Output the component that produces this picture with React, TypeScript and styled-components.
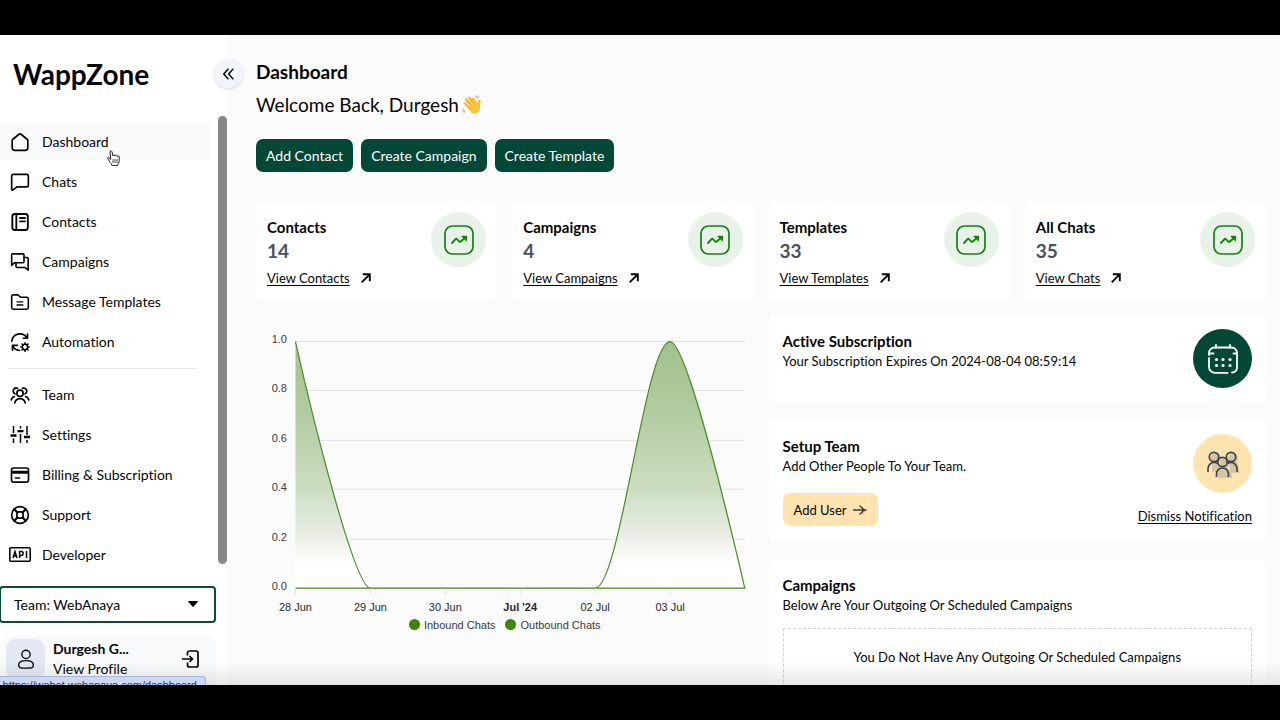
import React from "react";
import styled, { createGlobalStyle } from "styled-components";

const GlobalStyle = createGlobalStyle`
  *, *::before, *::after { box-sizing: border-box; }
  body {
    margin: 0;
    background: #000;
    color: #050505;
    font-family: Lato, "Open Sans", sans-serif;
    font-size: 14px;
    line-height: 20px;
    font-variant-ligatures: none;
  }
  h1, h2, h3, p, ul { margin: 0; padding: 0; }
  button, select { font: inherit; color: inherit; cursor: pointer; }
  a { color: inherit; }
  svg { display: block; flex: none; }
`;

const Screen = styled.div`
  height: 100vh;
  padding: 35px 0;
`;

const Shell = styled.div`
  position: relative;
  display: flex;
  height: 100%;
  overflow: hidden;
  background: #fbfbfb;
`;

const BottomShade = styled.div`
  position: absolute;
  inset: auto 0 0 0;
  height: 24px;
  background: linear-gradient(to bottom, rgba(0, 0, 0, 0), rgba(0, 0, 0, 0.09));
  pointer-events: none;
`;

/* ---------- Sidebar ---------- */

const Sidebar = styled.aside`
  position: relative;
  flex: none;
  width: 227px;
  background: #fff;
`;

const Brand = styled.div`
  height: 81px;
  padding: 19px 13px;
  font-size: 28px;
  line-height: 40px;
  font-weight: 700;
`;

const CollapseButton = styled.button`
  position: absolute;
  top: 24px;
  right: -16px;
  display: grid;
  place-items: center;
  width: 29px;
  height: 29px;
  padding: 0;
  border: 0;
  border-radius: 50%;
  background: #f1f4fd;
  box-shadow: 0 1px 3px rgba(0, 0, 0, 0.16);
`;

const NavArea = styled.div`
  display: flex;
  justify-content: space-between;
`;

const ScrollThumb = styled.div`
  width: 9px;
  margin-bottom: 9px;
  border-radius: 5px;
  background: #888;
`;

const NavList = styled.ul`
  display: flex;
  flex-direction: column;
  gap: 3px;
  width: 211px;
  padding-top: 7px;
  list-style: none;
`;

const NavLink = styled.a<{ $active?: boolean }>`
  display: flex;
  align-items: center;
  gap: 11px;
  height: 37px;
  padding-left: 9px;
  border-radius: 0 4px 4px 0;
  background: ${(p) => (p.$active ? "#f8fafc" : "transparent")};
  text-decoration: none;
`;

const NavIcon = styled.span`
  display: grid;
  place-items: center;
  width: 22px;
`;

const NavDivider = styled.li`
  height: 1px;
  margin: 5px 15px 4px 9px;
  background: #e4e5e8;
`;

const TeamPicker = styled.label`
  position: relative;
  display: block;
  width: 217px;
  margin: 13px 0 0 -1px;
`;

const TeamSelect = styled.select`
  appearance: none;
  width: 100%;
  height: 37px;
  padding: 0 13px;
  border: 2px solid #12483a;
  border-radius: 4px;
  background: #fff;
`;

const Caret = styled.svg`
  position: absolute;
  top: 15px;
  right: 18px;
  pointer-events: none;
`;

const Profile = styled.div`
  display: flex;
  align-items: flex-start;
  gap: 8px;
  width: 216px;
  height: 60px;
  margin-top: 12px;
  padding: 4px 16px 4px 6px;
  border-radius: 10px;
  background: #f8fafc;
`;

const Avatar = styled.div`
  display: grid;
  place-items: center;
  width: 39px;
  height: 40px;
  border-radius: 10px;
  background: #e3e8f4;
`;

const ProfileText = styled.div`
  flex: 1;
  line-height: 20px;

  strong { display: block; font-weight: 700; }
  a { text-decoration: none; }
`;

const LogoutButton = styled.button`
  margin-top: 11px;
  padding: 0;
  border: 0;
  background: none;
`;

const LinkPreview = styled.div`
  position: absolute;
  left: -8px;
  bottom: 0;
  width: 214px;
  height: 9px;
  padding: 0 8px;
  overflow: hidden;
  border: 1px solid #a9b6d6;
  border-bottom: 0;
  border-radius: 0 4px 0 0;
  background: #cbd8f6;
  color: #333a4c;
  font-family: "Liberation Sans", sans-serif;
  font-size: 11px;
  line-height: 16px;
  text-align: right;
  white-space: nowrap;
`;

const Pointer = styled.svg`
  position: absolute;
  top: 115px;
  left: 107px;
  pointer-events: none;
`;

/* ---------- Main column ---------- */

const Main = styled.main`
  flex: 1;
  min-width: 0;
  padding: 25px 14px 0 29px;
`;

const PageTitle = styled.h1`
  font-size: 19px;
  line-height: 24px;
  font-weight: 700;
`;

const Welcome = styled.p`
  display: flex;
  align-items: center;
  gap: 3px;
  margin-top: 8px;
  font-size: 19px;
  line-height: 26px;
`;

const Actions = styled.div`
  display: flex;
  gap: 8px;
  margin-top: 21px;
`;

const ActionButton = styled.button`
  height: 33px;
  padding: 0 10px;
  border: 0;
  border-radius: 7px;
  background: #034737;
  color: #fff;
  white-space: nowrap;
`;

const StatGrid = styled.section`
  display: grid;
  grid-template-columns: repeat(4, 1fr);
  gap: 15px;
  margin-top: 30px;
`;

const StatCard = styled.article`
  display: flex;
  justify-content: space-between;
  height: 98px;
  padding: 10px 11px;
  border-radius: 6px;
  background: #fff;
`;

const StatText = styled.div`
  padding-top: 5px;
`;

const CardTitle = styled.h2`
  font-size: 15px;
  line-height: 20px;
  font-weight: 700;
`;

const StatValue = styled.p`
  font-size: 19px;
  line-height: 28px;
  font-weight: 700;
  color: #4a505c;
`;

const StatLink = styled.a`
  display: flex;
  align-items: center;
  gap: 11px;
  font-size: 13px;
  line-height: 26px;
  text-decoration: none;

  span { text-decoration: underline; text-underline-offset: 2px; }
`;

const Disc = styled.div<{ $size: number; $color: string }>`
  display: grid;
  place-items: center;
  flex: none;
  width: ${(p) => p.$size}px;
  height: ${(p) => p.$size}px;
  border-radius: 50%;
  background: ${(p) => p.$color};
`;

const Columns = styled.div`
  display: grid;
  grid-template-columns: repeat(2, minmax(0, 1fr));
  gap: 15px;
  margin-top: 15px;
`;

const ChartPanel = styled.section`
  font-family: "Liberation Sans", Arial, sans-serif;
`;

const ChartSvg = styled.svg`
  width: 100%;
  height: auto;
`;

const Legend = styled.ul`
  display: flex;
  justify-content: center;
  gap: 10px;
  list-style: none;
  font-size: 11px;
  line-height: 16px;
  color: #373d3f;
`;

const LegendItem = styled.li`
  display: flex;
  align-items: center;
  gap: 4px;

  &::before {
    content: "";
    width: 11px;
    height: 11px;
    border-radius: 50%;
    background: #408508;
  }
`;

const Stack = styled.div`
  display: flex;
  flex-direction: column;
  gap: 18px;
`;

const Panel = styled.section<{ $minHeight: number }>`
  min-height: ${(p) => p.$minHeight}px;
  padding: 14px;
  border-radius: 6px;
  background: #fff;
  font-size: 13px;
`;

const PanelHead = styled.div`
  display: flex;
  justify-content: space-between;
  align-items: flex-start;
`;

const PanelText = styled.div`
  padding-top: 2px;
`;

const PanelFoot = styled.div`
  display: flex;
  justify-content: space-between;
  align-items: flex-end;
`;

const AddUserButton = styled.button`
  display: flex;
  align-items: center;
  gap: 6px;
  height: 33px;
  padding: 0 11px;
  border: 0;
  border-radius: 7px;
  background: #ffe4b0;
`;

const DismissLink = styled.a`
  text-underline-offset: 2px;
`;

const EmptyBox = styled.p`
  height: 90px;
  margin-top: 13px;
  padding-top: 18px;
  border: 1px dashed #cfcfd4;
  text-align: center;
`;

/* ---------- Icons ---------- */

const Icon = ({ children, size = 20, width = 1.8 }: { children: React.ReactNode; size?: number; width?: number }) => (
  <svg
    width={size}
    height={size}
    viewBox="0 0 24 24"
    fill="none"
    stroke="currentColor"
    strokeWidth={width}
    strokeLinecap="round"
    strokeLinejoin="round"
    aria-hidden="true"
  >
    {children}
  </svg>
);

const HomeIcon = () => (
  <Icon width={2}>
    <path d="M2.6 10.3a2 2 0 0 1 .8-1.6l7.4-6a2 2 0 0 1 2.4 0l7.4 6a2 2 0 0 1 .8 1.6V19a3 3 0 0 1-3 3H5.600a3 3 0 0 1-3-3z" />
  </Icon>
);
const ChatIcon = () => (
  <Icon width={2}>
    <path d="M4 2.800h16a2 2 0 0 1 2 2v11a2 2 0 0 1-2 2H8.500L3.200 21.700A.75.75 0 0 1 2 21V4.800a2 2 0 0 1 2-2z" />
  </Icon>
);
const BookIcon = () => (
  <Icon width={2.2}>
    <rect x="2.800" y="2.400" width="18.600" height="19.200" rx="3" />
    <path d="M7.600 2.400v19.200M12 7.200h6M12 11.200h6" />
  </Icon>
);
const ForumIcon = () => (
  <Icon width={1.9}>
    <path d="M3.200 2.200h12.600a1 1 0 0 1 1 1v8.600a1 1 0 0 1-1 1H5.400L2 16V3.200a1 1 0 0 1 1.200-1z" />
    <path d="M16.800 6.600h3.800a1.200 1.200 0 0 1 1.200 1.200v14l-3.600-3.200H8.600a1.400 1.400 0 0 1-1.400-1.400v-4.400" />
  </Icon>
);
const FolderIcon = () => (
  <Icon width={1.9}>
    <path d="M4 3.400h5a2 2 0 0 1 1.500.7l1.400 1.500a2 2 0 0 0 1.500.6H20a2 2 0 0 1 2 2v10.400a2 2 0 0 1-2 2H4a2 2 0 0 1-2-2V5.400a2 2 0 0 1 2-2z" />
    <path d="M8.400 11.800h7M8.400 15.600h7" strokeWidth="1.600" />
  </Icon>
);
const AutomationIcon = () => (
  <Icon width={2}>
    <path d="M2.200 11A9.800 9.800 0 0 1 20 6.500M21 2.500v5h-5M3 22v-6h6M3.200 16.500c1.600 3.600 4.600 5.500 8 5.600" />
    <circle cx="18" cy="18" r="3.200" strokeWidth="1.800" />
    <path d="M18 12.900v1.600M18 21.500v1.600M12.900 18h1.600M21.500 18h1.600M14.400 14.400l1.100 1.100M20.500 20.500l1.100 1.100M14.400 21.600l1.100-1.100M20.500 15.500l1.100-1.100" strokeWidth="1.900" />
  </Icon>
);
const TeamIcon = () => (
  <Icon width={2}>
    <circle cx="12" cy="10" r="3.800" />
    <path d="M5.600 21.500c1-3.400 3.400-5.200 6.400-5.200s5.400 1.800 6.400 5.200M6 10.600A3.600 3.600 0 1 1 9 4M18 10.600A3.600 3.600 0 1 0 15 4M1.500 18c.4-2.200 1.800-3.700 3.800-4.200M22.500 18c-.4-2.200-1.800-3.700-3.800-4.200" />
  </Icon>
);
const SlidersIcon = () => (
  <svg width="20" height="20" viewBox="0 0 20 20" fill="none" stroke="currentColor" strokeWidth="1.500" aria-hidden="true">
    <path d="M3.500 1v7M3.500 13.500V18M10.500 1v2.500M10.500 9v9M17 1v9M17 15v3" />
    <path d="M.5 10.500h6M7.500 6.200h6M14 12h6" strokeWidth="2.300" />
  </svg>
);
const CardIcon = () => (
  <Icon width={2}>
    <rect x="1.800" y="3.600" width="20.400" height="17" rx="2.500" />
    <path d="M2 8.700h20" strokeWidth="3.600" strokeLinecap="butt" />
    <path d="M6.500 15.600h5" />
  </Icon>
);
const SupportIcon = () => (
  <Icon width={2}>
    <circle cx="12" cy="12" r="10" />
    <rect x="8.300" y="8.300" width="7.400" height="7.400" rx="2.600" />
    <path d="M5.200 5.200l3.700 3.700M18.800 5.200l-3.700 3.700M5.200 18.800l3.700-3.700M18.800 18.800l-3.700-3.700" strokeWidth="2.600" />
  </Icon>
);
const ApiIcon = () => (
  <svg width="22" height="15" viewBox="0 0 22 15" fill="none" stroke="currentColor" strokeWidth="1.600" aria-hidden="true">
    <rect x=".8" y=".8" width="20.400" height="13.400" rx="1" />
    <path d="M4 11l2-6.500L8 11M4.700 9h2.600M10.600 11V4.500h1.600a1.900 1.900 0 0 1 0 3.900h-1.600M17.500 4v7" strokeWidth="1.500" />
  </svg>
);
const UserIcon = () => (
  <Icon size={22} width={1.500}>
    <circle cx="12" cy="7" r="4.500" />
    <path d="M4 18.600c0-3 3.500-4.800 8-4.800s8 1.800 8 4.800-1 3.400-8 3.400-8-.4-8-3.400z" />
  </Icon>
);
const LogoutIcon = () => (
  <svg width="18" height="18" viewBox="0 0 18 18" fill="none" stroke="currentColor" strokeWidth="1.700" strokeLinejoin="round" aria-hidden="true">
    <path d="M5.500 5.500V3a2 2 0 0 1 2-2H14a2 2 0 0 1 2 2v12a2 2 0 0 1-2 2H7.500a2 2 0 0 1-2-2v-2.500M0 9h10M7.500 6l3 3-3 3" />
  </svg>
);
const TrendIcon = () => (
  <svg width="30" height="30" viewBox="0 0 30 30" fill="none" stroke="#13830f" strokeWidth="1.700" strokeLinejoin="round" strokeLinecap="round" aria-hidden="true">
    <rect x="1" y="1" width="28" height="28" rx="7.500" />
    <path d="M8 18l3.300-3.700c.6-.6 1.300-.6 1.900 0l1.900 2c.6.6 1.400.6 2 0l5-4.300" strokeWidth="1.900" />
    <path d="M18.200 11.400h4.300v4.100z" fill="#13830f" strokeWidth="1.200" />
  </svg>
);
const UpRightIcon = () => (
  <svg width="10" height="10" viewBox="0 0 10 10" fill="none" stroke="currentColor" strokeWidth="1.900" aria-hidden="true">
    <path d="M.7 9.300L8.700 1.300M1.800 1.200h7v7" />
  </svg>
);
const CalendarIcon = () => (
  <svg width="30" height="30" viewBox="0 0 30 30" fill="none" stroke="#fff" strokeWidth="1.800" strokeLinecap="round" aria-hidden="true">
    <path d="M8 1v3M22 1v3M1 11V9a5.500 5.500 0 0 1 5.500-5.500h17A5.500 5.500 0 0 1 29 9v14a5 5 0 0 1-5 5.500M19.500 28.900H7a6 6 0 0 1-6-6V14M1.500 9.500h4M25.500 9.500h3" />
    <g fill="#fff" stroke="none">
      <circle cx="8.500" cy="15.500" r="1.600" />
      <circle cx="15" cy="15.500" r="1.600" />
      <circle cx="22" cy="15.500" r="1.600" />
      <circle cx="8.500" cy="21.500" r="1.600" />
      <circle cx="15" cy="21.500" r="1.600" />
      <circle cx="22" cy="21.500" r="1.600" />
    </g>
  </svg>
);
const PeopleIcon = () => (
  <svg width="34" height="30" viewBox="0 0 34 30" fill="none" stroke="#3d4351" strokeWidth="1.700" aria-hidden="true">
    <g fill="#d5c5a2" stroke="none">
      <circle cx="10" cy="9" r="5" />
      <circle cx="27" cy="9" r="5" />
      <path d="M6 15h8v8H6zM24 13h7q2 3 2 11h-9z" />
      <path d="M12 29c0-6 2-11 6-11s8 5 8 11z" />
      <circle cx="19" cy="14" r="5" />
    </g>
    <circle cx="8" cy="8" r="4.700" />
    <circle cx="25" cy="8" r="4.700" />
    <circle cx="16.500" cy="13" r="4.700" />
    <path d="M2 23v-3c0-3.600 2.500-6.500 6-6.500 1.300 0 2.500.4 3.500 1M31 23v-3c0-3.600-2.500-6.500-6-6.500-1.300 0-2.500.4-3.500 1M10.500 28v-2c0-4.500 2.400-7 6-7s6 2.500 6 7v2" />
  </svg>
);
const ArrowRightIcon = () => (
  <svg width="14" height="12" viewBox="0 0 14 12" fill="none" stroke="#3c3830" strokeWidth="1.300" aria-hidden="true">
    <path d="M9 2.500L13.500 6.500 9 11z" fill="#c9b283" stroke="none" />
    <path d="M0 6h13.500M6.500 1.500L11 6l-4.500 4.500" />
  </svg>
);
const WavingHand = () => (
  <svg width="20" height="20" viewBox="0 0 20 20" role="img" aria-label="Waving hand">
    <g stroke="#f8bd35" strokeLinecap="round" fill="none">
      <path d="M2.800 8.300l6 6.200" strokeWidth="2.500" />
      <path d="M4.200 4.800l7 7" strokeWidth="2.700" />
      <path d="M7.400 3l6 7" strokeWidth="2.700" />
      <path d="M11 3.600l4 6" strokeWidth="2.500" />
      <path d="M17.500 6.200c-1.200 1.800-.4 3.500-.8 5.500" strokeWidth="2.700" />
    </g>
    <path d="M5.500 11.500l8-5 4.200 4.200c1.300 3-.8 6.700-4 7.700-2.300.6-4-.2-5.400-1.900z" fill="#fbc63f" />
    <path d="M5.500 6.500l4.800 4.800M8.600 5l4.600 4.800M4.500 9.800l4 4" stroke="#e79c1d" strokeWidth=".6" fill="none" />
    <path d="M13 1.200c1.300.2 2.300 1 2.800 2.400M14.800.4c1.300.5 2 1.300 2.300 2.300M1.200 13.500c.2 1.600 1 2.700 2.500 3.300M.4 15.400c.4 1.400 1.200 2.200 2.300 2.600" stroke="#8a8f96" strokeWidth=".8" fill="none" />
  </svg>
);

/* ---------- Data ---------- */

type NavEntry = { label: string; icon: React.ReactNode };

const primaryNav: NavEntry[] = [
  { label: "Dashboard", icon: <HomeIcon /> },
  { label: "Chats", icon: <ChatIcon /> },
  { label: "Contacts", icon: <BookIcon /> },
  { label: "Campaigns", icon: <ForumIcon /> },
  { label: "Message Templates", icon: <FolderIcon /> },
  { label: "Automation", icon: <AutomationIcon /> },
];

const secondaryNav: NavEntry[] = [
  { label: "Team", icon: <TeamIcon /> },
  { label: "Settings", icon: <SlidersIcon /> },
  { label: "Billing & Subscription", icon: <CardIcon /> },
  { label: "Support", icon: <SupportIcon /> },
  { label: "Developer", icon: <ApiIcon /> },
];

const stats = [
  { title: "Contacts", value: 14, link: "View Contacts" },
  { title: "Campaigns", value: 4, link: "View Campaigns" },
  { title: "Templates", value: 33, link: "View Templates" },
  { title: "All Chats", value: 35, link: "View Chats" },
];

const yLabels = ["1.0", "0.8", "0.6", "0.4", "0.2", "0.0"];
const xLabels = ["28 Jun", "29 Jun", "30 Jun", "Jul '24", "02 Jul", "03 Jul"];

const NavItem = ({ label, icon, active }: NavEntry & { active?: boolean }) => (
  <li>
    <NavLink href="#" $active={active}>
      <NavIcon>{icon}</NavIcon>
      {label}
    </NavLink>
  </li>
);

const Chart = () => {
  const curve =
    "M39.500 26.700C53.500 89 98 273.400 114.500 273.400H339.500C364.500 273.400 389.500 26.700 414.500 26.700C431 26.700 475 212 489.300 273.400";
  return (
    <ChartPanel aria-label="Inbound and outbound chats">
      <ChartSvg viewBox="0 0 498 302">
        <defs>
          <linearGradient id="area" x1="0" y1="0" x2="0" y2="1">
            <stop offset="0" stopColor="#9dbd87" />
            <stop offset="0.3" stopColor="#afca9d" />
            <stop offset="0.6" stopColor="#cadcbe" />
            <stop offset="0.78" stopColor="#e8ece4" />
            <stop offset="0.9" stopColor="#fff" />
          </linearGradient>
        </defs>
        {yLabels.map((label, i) => (
          <g key={label}>
            <path d={`M39.500 ${26.500 + Math.round(i * 49.400)}H489.500`} stroke="#e0e0e0" />
            <text x="31" y={28 + Math.round(i * 49.400)} textAnchor="end" fontSize="11" fill="#373d3f">
              {label}
            </text>
          </g>
        ))}
        <path d={`${curve}H39.500z`} fill="url(#area)" fillOpacity="0.95" />
        <path d={`${curve}H39.500`} fill="none" stroke="#4c8a2a" strokeWidth="1.200" />
        {xLabels.map((label, i) => (
          <g key={label}>
            <path d={`M${39.500 + i * 75} 274V280`} stroke="#e0e0e0" />
            <text
              x={39.500 + i * 75}
              y="296"
              textAnchor="middle"
              fontSize="11"
              fontWeight={label.startsWith("Jul") ? 700 : 400}
              fill="#26292b"
            >
              {label}
            </text>
          </g>
        ))}
      </ChartSvg>
      <Legend>
        <LegendItem>Inbound Chats</LegendItem>
        <LegendItem>Outbound Chats</LegendItem>
      </Legend>
    </ChartPanel>
  );
};

export default function App() {
  return (
    <Screen>
      <GlobalStyle />
      <Shell>
        <Sidebar>
          <Brand>WappZone</Brand>
          <CollapseButton aria-label="Collapse sidebar">
            <svg width="11" height="12" viewBox="0 0 11 12" fill="none" stroke="currentColor" strokeWidth="1.400">
              <path d="M5.500.8L.8 6l4.700 5.200M10.300.8L5.600 6l4.700 5.200" />
            </svg>
          </CollapseButton>
          <NavArea>
            <NavList>
              {primaryNav.map((item, i) => (
                <NavItem key={item.label} {...item} active={i === 0} />
              ))}
              <NavDivider role="separator" />
              {secondaryNav.map((item) => (
                <NavItem key={item.label} {...item} />
              ))}
            </NavList>
            <ScrollThumb />
          </NavArea>
          <TeamPicker>
            <TeamSelect aria-label="Team">
              <option>Team: WebAnaya</option>
            </TeamSelect>
            <Caret width="10" height="6" viewBox="0 0 10 6">
              <path d="M.6 0h8.800q.8.300.2.900L5.600 5.500q-.6.600-1.200 0L.4.900Q-.2.300.6 0z" />
            </Caret>
          </TeamPicker>
          <Profile>
            <Avatar>
              <UserIcon />
            </Avatar>
            <ProfileText>
              <strong>Durgesh G...</strong>
              <a href="#">View Profile</a>
            </ProfileText>
            <LogoutButton aria-label="Log out">
              <LogoutIcon />
            </LogoutButton>
          </Profile>
          <Pointer width="13" height="16" viewBox="0 0 13 16" fill="#fff" stroke="#222" strokeLinejoin="round">
            <path d="M3.700 9.500L2.400 7.800C1.300 6.700 0 7.700.9 8.900l2.300 3.500c.6 1 1.500 1.500 1.500 3h6c0-1.500 1.500-2.600 1.500-4.600V6.900c0-1.400-1.700-1.500-1.800-.3 0-1.500-2-1.800-2.200-.5-.1-1.400-2.100-1.600-2.300-.3L5 1.900C4.600.2 2.700.4 3 2.100z" />
            <path d="M6 9v4M8 9v4M10 9v4" strokeWidth=".8" />
          </Pointer>
        </Sidebar>
        <Main>
          <PageTitle>Dashboard</PageTitle>
          <Welcome>
            Welcome Back, Durgesh <WavingHand />
          </Welcome>
          <Actions>
            <ActionButton>Add Contact</ActionButton>
            <ActionButton>Create Campaign</ActionButton>
            <ActionButton>Create Template</ActionButton>
          </Actions>
          <StatGrid>
            {stats.map((s) => (
              <StatCard key={s.title}>
                <StatText>
                  <CardTitle>{s.title}</CardTitle>
                  <StatValue>{s.value}</StatValue>
                  <StatLink href="#">
                    <span>{s.link}</span>
                    <UpRightIcon />
                  </StatLink>
                </StatText>
                <Disc $size={55} $color="#e8f2e8">
                  <TrendIcon />
                </Disc>
              </StatCard>
            ))}
          </StatGrid>
          <Columns>
            <Chart />
            <Stack>
              <Panel $minHeight={87}>
                <PanelHead>
                  <PanelText>
                    <CardTitle>Active Subscription</CardTitle>
                    <p>Your Subscription Expires On 2024-08-04 08:59:14</p>
                  </PanelText>
                  <Disc $size={59} $color="#034737">
                    <CalendarIcon />
                  </Disc>
                </PanelHead>
              </Panel>
              <Panel $minHeight={121}>
                <PanelHead>
                  <PanelText>
                    <CardTitle>Setup Team</CardTitle>
                    <p>Add Other People To Your Team.</p>
                  </PanelText>
                  <Disc $size={59} $color="#ffe4b0">
                    <PeopleIcon />
                  </Disc>
                </PanelHead>
                <PanelFoot>
                  <AddUserButton>
                    Add User <ArrowRightIcon />
                  </AddUserButton>
                  <DismissLink href="#">Dismiss Notification</DismissLink>
                </PanelFoot>
              </Panel>
              <Panel $minHeight={180}>
                <PanelText>
                  <CardTitle>Campaigns</CardTitle>
                  <p>Below Are Your Outgoing Or Scheduled Campaigns</p>
                </PanelText>
                <EmptyBox>You Do Not Have Any Outgoing Or Scheduled Campaigns</EmptyBox>
              </Panel>
            </Stack>
          </Columns>
        </Main>
        <BottomShade />
        <LinkPreview>https://wabot.webanaya.com/dashboard</LinkPreview>
      </Shell>
    </Screen>
  );
}
